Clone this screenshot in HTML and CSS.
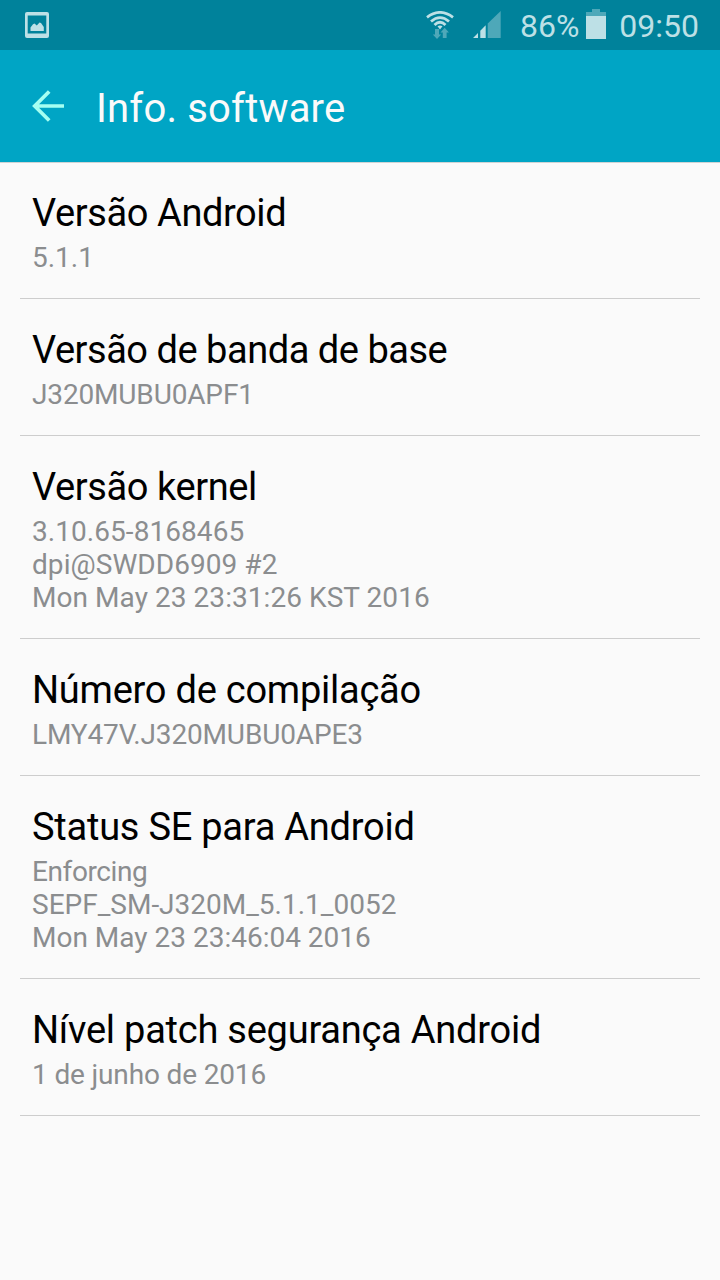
FILE: index.html
```html
<!DOCTYPE html>
<html lang="pt-BR">
<head>
<meta charset="utf-8">
<title>Info. software</title>
<link rel="stylesheet" href="styles.css">
</head>
<body>
<div class="status">
  <svg class="shot" width="24" height="26" viewBox="0 0 24 26"><path d="M2 0h20a2 2 0 0 1 2 2v22a2 2 0 0 1-2 2H2a2 2 0 0 1-2-2V2a2 2 0 0 1 2-2zM2.700 3.500v18h18.600v-18z" fill="#bde0e6" fill-rule="evenodd"/><path d="M5.500 19v-3.500l2.500-3.300 1.500-.7 2.300 2 2.700-3 1.500.5 2.800 4V19z" fill="#bde0e6"/></svg>
  <svg class="wifi" width="28" height="28" viewBox="0 0 28 28"><g fill="none" stroke="#bde0e6" stroke-width="2.800"><path d="M1 6.300Q14-3.500 27 6.300"/><path d="M5 10.500Q14 2.800 23 10.500"/><path d="M8.500 14Q14 8.700 19.500 14"/></g><path d="M11.500 15.300Q14 13.800 16.500 15.300L14 18.500z" fill="#bde0e6"/><path d="M9 18h4v5.500h2.200L11 28l-4.200-4.500H9zM16.800 27v-5.500h-2.300l4.200-4.800 4.200 4.800h-2.300V27z" fill="#4ea8b9"/></svg>
  <svg class="signal" width="28" height="28" viewBox="0 0 28 28"><path d="M0 27L5 22v5zM7.300 19.700L12.700 14.300V27H7.300z" fill="#bde0e6"/><path d="M14.700 12.500L27.700 0v27h-13z" fill="#4ea8b9"/></svg>
  <span class="percent">86%</span>
  <svg class="battery" width="20" height="30" viewBox="0 0 20 30"><path d="M6 0h8v3h6v4H0V3h6z" fill="#4ea8b9"/><path d="M0 7h20v23H0z" fill="#bde0e6"/></svg>
  <span class="clock">09:50</span>
</div>
<header class="bar">
  <svg class="back" width="32" height="32" viewBox="0 0 32 32"><path d="M32 16H3M17.200 1.500L2.700 16l14.500 14.500" fill="none" stroke="#a5fff2" stroke-width="3.700"/></svg>
  <h1 class="title">Info. software</h1>
</header>
<main class="list">
  <section class="item"><h2 class="name tight">Versão Android</h2><p class="value">5.1.1</p></section>
  <section class="item"><h2 class="name tighter">Versão de banda de base</h2><p class="value snug">J320MUBU0APF1</p></section>
  <section class="item"><h2 class="name tight">Versão kernel</h2><p class="value loose">3.10.65-8168465<br>dpi@SWDD6909 #2<br>Mon May 23 23:31:26 KST 2016</p></section>
  <section class="item"><h2 class="name">Número de compilação</h2><p class="value snug">LMY47V.J320MUBU0APE3</p></section>
  <section class="item"><h2 class="name">Status SE para Android</h2><p class="value"><span class="word">Enforcing</span><br>SEPF_SM-J320M_5.1.1_0052<br>Mon May 23 23:46:04 2016</p></section>
  <section class="item"><h2 class="name">Nível patch segurança Android</h2><p class="value snug">1 de junho de 2016</p></section>
</main>
</body>
</html>
```

FILE: styles.css
```css
* { box-sizing: border-box; margin: 0; padding: 0; }
body { width: 720px; height: 1280px; overflow: hidden; background: #fafafa; font-family: Roboto, sans-serif; font-weight: 400; }
.status { height: 50px; background: #00829b; display: flex; align-items: center; padding: 0 21px 0 25px; color: #bde0e6; font-size: 32px; }
.percent, .clock { padding-top: 2px; }
.shot { margin-right: auto; }
.wifi { margin-right: 19px; }
.signal { margin-right: 19px; }
.percent { margin-right: 7px; }
.battery { margin: 0 13px 2px 0; }
.bar { height: 112px; background: #00a5c5; display: flex; align-items: center; padding: 0 32px; gap: 32px; box-shadow: 0 1px 0 #cfd3d4; }
.title { color: #fafafa; font-size: 40px; font-weight: 400; letter-spacing: .18px; padding-top: 4px; }
.list { padding: 0 20px; }
.item { border-bottom: 1px solid #cdcdcd; padding: 27px 12px 24px; }
.name { color: #000; font-size: 38px; font-weight: 400; line-height: 48px; padding-bottom: 4px; letter-spacing: -.24px; }
.name.tight { letter-spacing: -.4px; }
.name.tighter { letter-spacing: -.47px; }
.value { color: #8b8d8f; font-size: 28px; line-height: 33px; }
.value.snug { letter-spacing: -.15px; }
.value.loose { letter-spacing: .06px; }
.word { letter-spacing: -.4px; }
```
